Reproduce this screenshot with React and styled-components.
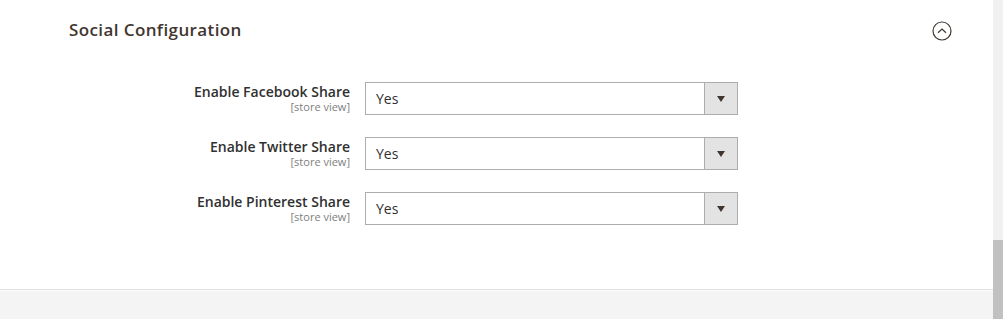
import React from 'react';
import styled, { createGlobalStyle } from 'styled-components';

const GlobalStyle = createGlobalStyle`
  html, body {
    margin: 0;
    padding: 0;
    overflow: hidden;
    background: #fff;
    font-family: "Open Sans", "Liberation Sans", sans-serif;
  }
`;

const StyledViewport = styled.div`
  display: flex;
  width: 1003px;
  height: 319px;
`;

const StyledPage = styled.div`
  flex: 1;
  display: flex;
  flex-direction: column;
`;

const StyledSection = styled.section`
  height: 289px;
  padding: 0 41px 0 69px;
  box-sizing: border-box;
`;

const StyledHeader = styled.div`
  display: flex;
  align-items: center;
  justify-content: space-between;
  height: 60px;
`;

const StyledTitle = styled.h2`
  margin: 0 0 1px;
  font-size: 17px;
  font-weight: 600;
  color: #41362f;
  letter-spacing: 0.4px;
`;

const StyledToggle = styled.button`
  border: none;
  background: none;
  padding: 0;
  margin: 2px 0 0;
  width: 22px;
  height: 22px;
  cursor: pointer;
  display: flex;
`;

const StyledFields = styled.div`
  display: flex;
  flex-direction: column;
  gap: 22px;
  padding-top: 22px;
`;

const StyledRow = styled.div`
  display: flex;
  align-items: flex-start;
  gap: 15px;
`;

const StyledLabel = styled.label`
  width: 281px;
  display: flex;
  flex-direction: column;
  align-items: flex-end;
  padding-top: 1px;
`;

const StyledLabelText = styled.span`
  font-size: 14px;
  font-weight: 600;
  color: #303030;
  line-height: 18px;
`;

const StyledScope = styled.span`
  font-size: 11px;
  color: #808080;
  line-height: 12px;
`;

const StyledSelect = styled.div`
  width: 373px;
  height: 33px;
  box-sizing: border-box;
  border: 1px solid #adadad;
  display: flex;
  align-items: center;
  font-size: 14px;
  color: #303030;
`;

const StyledValue = styled.span`
  flex: 1;
  padding-left: 10px;
`;

const StyledArrow = styled.span`
  width: 32px;
  height: 100%;
  background: #e3e3e3;
  border-left: 1px solid #adadad;
  display: flex;
  align-items: center;
  justify-content: center;
  &::after {
    content: '';
    border-left: 4px solid transparent;
    border-right: 4px solid transparent;
    border-top: 6px solid #41362f;
  }
`;

const StyledFooter = styled.div`
  flex: 1;
  background: #f4f4f4;
  border-top: 1px solid #e3e3e3;
  box-shadow: inset 0 2px 0 #f8f8f8;
`;

const StyledScrollbar = styled.div`
  width: 10px;
  background: #f1f1f1;
  display: flex;
  flex-direction: column;
  justify-content: flex-end;
`;

const StyledThumb = styled.div`
  height: 79px;
  background: #c1c1c1;
`;

const fields = ['Enable Facebook Share', 'Enable Twitter Share', 'Enable Pinterest Share'];

function App() {
  return (
    <StyledViewport>
      <GlobalStyle />
      <StyledPage>
        <StyledSection>
          <StyledHeader>
            <StyledTitle>Social Configuration</StyledTitle>
            <StyledToggle type="button" aria-label="collapse">
              <svg width="22" height="22" viewBox="0 0 22 22">
                <circle cx="12" cy="11" r="9" fill="none" stroke="#41362f" strokeWidth="1.2" />
                <path d="M8 12.8 L12 9 L16 12.8" fill="none" stroke="#41362f" strokeWidth="1.2" />
              </svg>
            </StyledToggle>
          </StyledHeader>
          <StyledFields>
            {fields.map((f) => (
              <StyledRow key={f}>
                <StyledLabel>
                  <StyledLabelText>{f}</StyledLabelText>
                  <StyledScope>[store view]</StyledScope>
                </StyledLabel>
                <StyledSelect>
                  <StyledValue>Yes</StyledValue>
                  <StyledArrow />
                </StyledSelect>
              </StyledRow>
            ))}
          </StyledFields>
        </StyledSection>
        <StyledFooter />
      </StyledPage>
      <StyledScrollbar>
        <StyledThumb />
      </StyledScrollbar>
    </StyledViewport>
  );
}

export default App;
